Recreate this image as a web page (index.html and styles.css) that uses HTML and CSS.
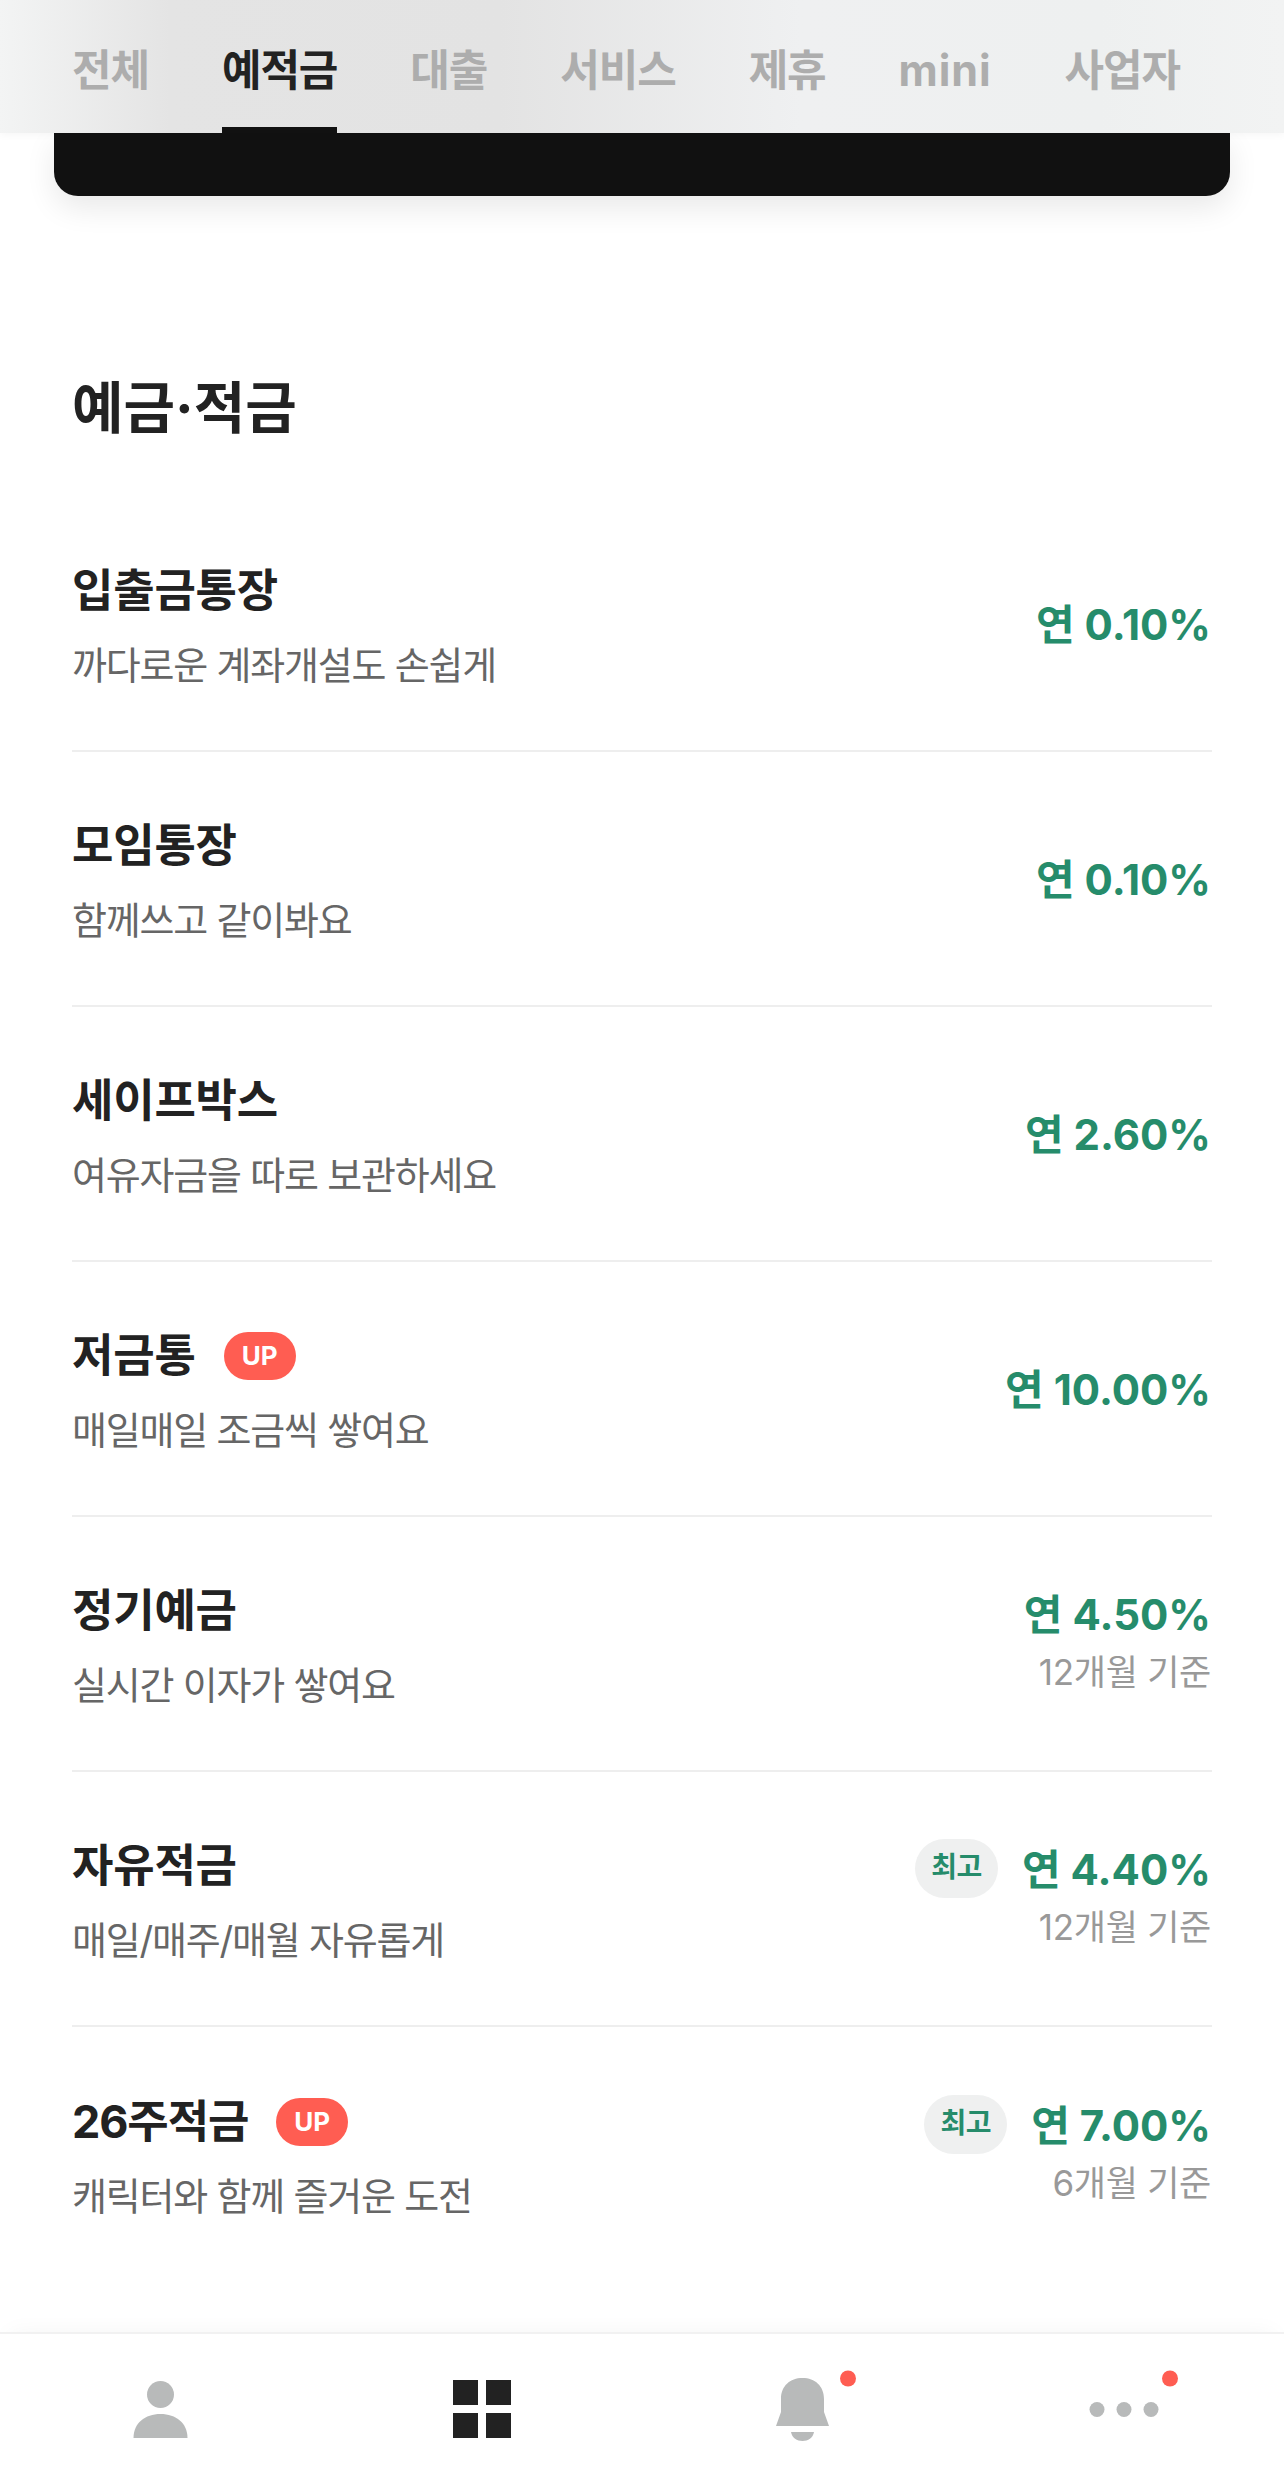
FILE: index.html
```html
<!DOCTYPE html>
<html lang="ko">
<head>
  <meta charset="UTF-8">
  <title>예금·적금</title>
  <meta name="viewport" content="width=device-width, initial-scale=1.0">
  <link rel="stylesheet" href="styles.css">
</head>
<body>
  <div class="page">
    <!-- Tabs -->
    <nav class="tabs">
      <a class="tab">전체</a>
      <a class="tab active">예적금</a>
      <a class="tab">대출</a>
      <a class="tab">서비스</a>
      <a class="tab">제휴</a>
      <a class="tab latin">mini</a>
      <a class="tab">사업자</a>
    </nav>
    <div class="hero"></div>

    <!-- Products -->
    <section class="products">
      <h2>예금·적금</h2>
      <ul class="list">
        <li class="row">
          <div class="info">
            <div class="name">입출금통장</div>
            <div class="desc">까다로운 계좌개설도 손쉽게</div>
          </div>
          <div class="rate"><div class="rate-line"><span class="value">연 0.10%</span></div></div>
        </li>
        <li class="row">
          <div class="info">
            <div class="name">모임통장</div>
            <div class="desc">함께쓰고 같이봐요</div>
          </div>
          <div class="rate"><div class="rate-line"><span class="value">연 0.10%</span></div></div>
        </li>
        <li class="row">
          <div class="info">
            <div class="name">세이프박스</div>
            <div class="desc">여유자금을 따로 보관하세요</div>
          </div>
          <div class="rate"><div class="rate-line"><span class="value">연 2.60%</span></div></div>
        </li>
        <li class="row">
          <div class="info">
            <div class="name">저금통 <span class="up">UP</span></div>
            <div class="desc">매일매일 조금씩 쌓여요</div>
          </div>
          <div class="rate"><div class="rate-line"><span class="value">연 10.00%</span></div></div>
        </li>
        <li class="row">
          <div class="info">
            <div class="name">정기예금</div>
            <div class="desc">실시간 이자가 쌓여요</div>
          </div>
          <div class="rate">
            <div class="rate-line"><span class="value">연 4.50%</span></div>
            <div class="term">12개월 기준</div>
          </div>
        </li>
        <li class="row">
          <div class="info">
            <div class="name">자유적금</div>
            <div class="desc">매일/매주/매월 자유롭게</div>
          </div>
          <div class="rate">
            <div class="rate-line"><span class="best">최고</span><span class="value">연 4.40%</span></div>
            <div class="term">12개월 기준</div>
          </div>
        </li>
        <li class="row">
          <div class="info">
            <div class="name"><span class="title-num">26주적금</span> <span class="up">UP</span></div>
            <div class="desc">캐릭터와 함께 즐거운 도전</div>
          </div>
          <div class="rate">
            <div class="rate-line"><span class="best">최고</span><span class="value">연 7.00%</span></div>
            <div class="term">6개월 기준</div>
          </div>
        </li>
      </ul>
    </section>

    <!-- Bottom navigation -->
    <footer class="bottom">
      <div class="bottom-item">
        <svg class="icon" viewBox="0 0 100 90">
          <circle cx="49.5" cy="32.5" r="13.5" fill="#b8baba"/>
          <path d="M22.5 76C22.5 61 34 52 49.5 52S76.500 61 76.500 76Z" fill="#b8baba"/>
        </svg>
      </div>
      <div class="bottom-item">
        <svg class="icon" viewBox="0 0 100 90">
          <rect x="21" y="18" width="25" height="25" fill="#222"/>
          <rect x="54" y="18" width="25" height="25" fill="#222"/>
          <rect x="21" y="51" width="25" height="25" fill="#222"/>
          <rect x="54" y="51" width="25" height="25" fill="#222"/>
        </svg>
      </div>
      <div class="bottom-item">
        <svg class="icon" viewBox="0 0 100 90">
          <path d="M23 64L28 50V37C28 24 37 16 49.500 16S71 24 71 37V50L76 64Z" fill="#b8baba"/>
          <path d="M38 70H61C60 76 55 79 49.500 79S39 76 38 70Z" fill="#b8baba"/>
          <circle cx="95" cy="16.500" r="8" fill="#ff5d52"/>
        </svg>
      </div>
      <div class="bottom-item">
        <svg class="icon" viewBox="0 0 100 90">
          <circle cx="23" cy="47.500" r="7.500" fill="#b8baba"/>
          <circle cx="50" cy="47.500" r="7.500" fill="#b8baba"/>
          <circle cx="77" cy="47.500" r="7.500" fill="#b8baba"/>
          <circle cx="96" cy="16.500" r="8" fill="#ff5d52"/>
        </svg>
      </div>
    </footer>
  </div>
</body>
</html>
```
FILE: styles.css
```css
/* Reset & Base Styles */
* {
  box-sizing: border-box;
  margin: 0;
  padding: 0;
}
body {
  font-family: Inter, 'Noto Sans CJK KR', sans-serif;
  background: #fff;
  color: #222;
}
.page {
  display: flex;
  flex-direction: column;
  width: 1284px;
  height: 2479px;
  overflow: hidden;
}
/* Tabs */
.tabs {
  display: flex;
  gap: 73px;
  height: 133px;
  padding: 0 72px;
  background: linear-gradient(90deg, #f3f4f4 0, #e4e4e4 170px, #e3e3e3 500px, #eff0f1 800px, #eef0f0 1100px, #f2f3f3 100%);
  box-shadow: 0 2px 8px rgba(0, 0, 0, 0.04);
  position: relative;
}
.tab {
  height: 133px;
  padding-top: 40px;
  font-size: 43px;
  line-height: 60px;
  font-weight: 700;
  letter-spacing: -1.1px;
  color: #adadad;
  white-space: nowrap;
}
.tab.latin {
  letter-spacing: 0.9px;
}
.tab.active {
  color: #222;
  border-bottom: 6px solid #111;
}
.hero {
  height: 63px;
  margin: 0 54px;
  background: #111;
  border-radius: 0 0 24px 24px;
  box-shadow: 0 12px 30px rgba(0, 0, 0, 0.09);
}
/* Products */
.products {
  padding: 170px 72px 0;
}
h2 {
  font-size: 56px;
  line-height: 84px;
  font-weight: 700;
  color: #222;
}
.list {
  list-style: none;
  margin-top: 47px;
}
.row {
  display: flex;
  align-items: center;
  justify-content: space-between;
  height: 255px;
  border-bottom: 2px solid #eee;
}
.row:last-child {
  border-bottom: none;
}
.info {
  padding-top: 5px;
}
.name {
  display: flex;
  align-items: center;
  gap: 28px;
  font-size: 45px;
  line-height: 60px;
  font-weight: 700;
  letter-spacing: -0.2px;
  color: #222;
}
.title-num {
  letter-spacing: -1.1px;
}
.desc {
  margin-top: 18px;
  font-size: 38px;
  line-height: 52px;
  letter-spacing: -1.2px;
  color: #666;
}
.up {
  width: 72px;
  height: 48px;
  border-radius: 24px;
  background: #ff5d52;
  color: #fff;
  font-size: 26px;
  line-height: 48px;
  letter-spacing: 0;
  text-align: center;
}
.rate {
  display: flex;
  flex-direction: column;
  align-items: flex-end;
  padding: 2px 1px 0 0;
}
.rate-line {
  display: flex;
  align-items: center;
  gap: 24px;
}
.value {
  font-size: 42px;
  line-height: 60px;
  font-weight: 700;
  color: #268c6b;
}
.best {
  width: 83px;
  height: 59px;
  margin-bottom: 2px;
  border-radius: 30px;
  background: #eff0f0;
  color: #268c6b;
  font-size: 28px;
  line-height: 56px;
  font-weight: 700;
  letter-spacing: -0.5px;
  text-align: center;
}
.term {
  margin: 2px 0 8px;
  font-size: 35px;
  line-height: 50px;
  letter-spacing: -0.3px;
  color: #999;
}
/* Bottom navigation */
.bottom {
  display: grid;
  grid-template-columns: repeat(4, 1fr);
  margin-top: auto;
  height: 147px;
  padding-top: 28px;
  border-top: 2px solid #f1f1f1;
  box-shadow: 0 -8px 22px -10px rgba(0, 0, 0, 0.05);
}
.bottom-item {
  display: flex;
  justify-content: center;
}
.icon {
  width: 100px;
  height: 90px;
  overflow: visible;
}
```
